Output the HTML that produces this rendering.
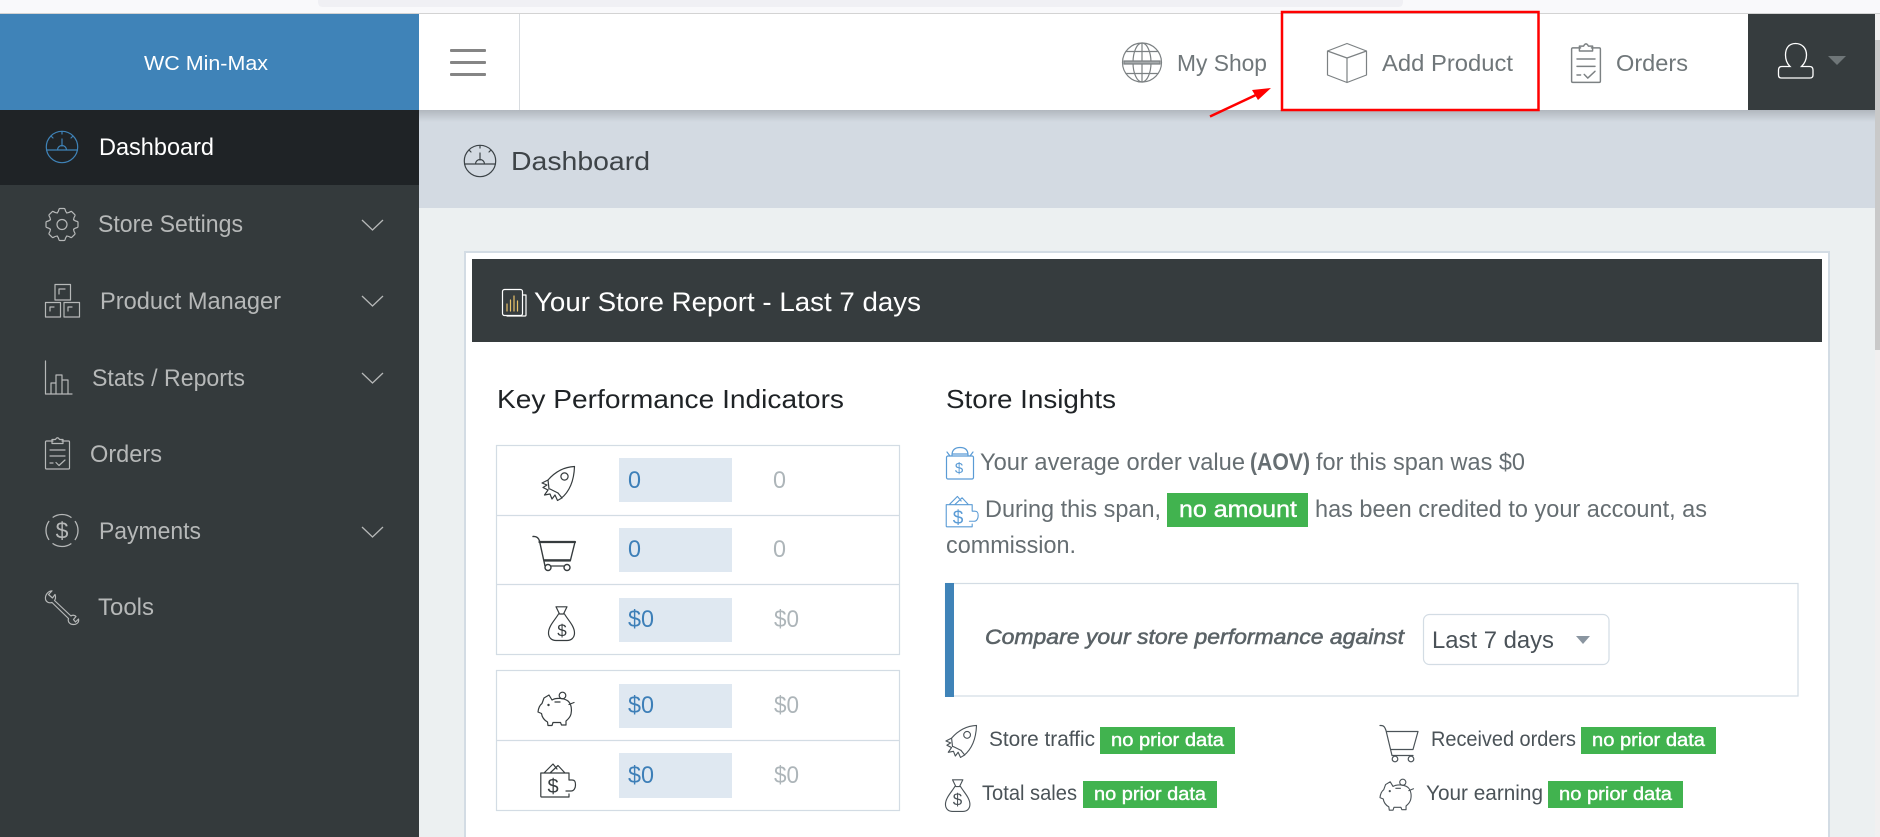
<!DOCTYPE html>
<html lang="en"><head><meta charset="utf-8"><title>Dashboard</title>
<style>
html,body{margin:0;padding:0;width:1880px;height:837px;overflow:hidden;background:#ecf0f1}
svg{display:block}
text{font-family:"Liberation Sans","DejaVu Sans",sans-serif}
.n{font-size:24px;fill:#b6b8b8}
.h{font-size:23.5px;fill:#70777a}
.b{font-size:24px;fill:#666e72}
.s{font-size:21px;fill:#4b5358}
.g{font-size:18px;fill:#fff;stroke:#fff;stroke-width:.4}
.v{font-size:24px;fill:#3d7fb8}
.p{font-size:24px;fill:#adb5b9}
.i{fill:none;stroke-width:1.2;stroke-linecap:round;stroke-linejoin:round}
</style></head><body>
<svg xmlns="http://www.w3.org/2000/svg" width="1880" height="837" viewBox="0 0 1880 837">
<defs>
<linearGradient id="sh" x1="0" y1="0" x2="0" y2="1"><stop offset="0" stop-color="#000" stop-opacity=".16"/><stop offset="1" stop-color="#000" stop-opacity="0"/></linearGradient>
<g id="gauge" class="i"><circle cx="0" cy="0" r="15.7"/><path d="M-15.5 3H15.5M0-8V-1M-4.5 3A4.5 4.5 0 0 1 4.5 3M0-15.500V-13M-10.500-10.500L-9-9M10.500-10.500L9-9"/></g>
<path id="tooth" d="M-4.78-11.55C-4-12.5-3.5-13-3-15.3Q-2.8-16 -2-16H2Q2.8-16 3-15.3C3.5-13 4-12.5 4.78-11.55"/>
<g id="rocket" class="i"><path d="M33.5 0.5C22 1 14 6 7 14L1 17L6 19L2 21.5L7 24L3.5 29L9 28L11 33L14 29L16.5 34.5L20 32.5C28 26 33 15 33.5 0.5ZM7 14L8 23M21 32L17 27"/><circle cx="23.5" cy="10.5" r="3.6"/><path d="M9 23L17 27"/></g>
<g id="cart" class="i"><path d="M0 0H1C4 0 5 2 6 5L12 30M7 6H38L33 24H11M12 30H33"/><circle cx="15" cy="33.500" r="2.800"/><circle cx="31" cy="33.500" r="2.800"/></g>
<g id="bag" class="i"><path d="M8 0.8H19L15.5 8H11.5ZM10.5 8C7 14 0.5 20 0.5 27C0.5 32 4 34.5 8 34.5H19C23 34.5 26.5 32 26.5 27C26.5 20 20 14 16.5 8"/></g>
<g id="pig" class="i"><path d="M6 6L11 3L14 8C18 5.5 26 6 30 9C33.500 12 34 18 33 22C32 26 29 28 28 29V33H23.500L22.500 30.500H15L14 33.500H10L9.500 30C6 28 4 25 3.500 21.500L0 20C.5 15 2 13 4 11.500ZM31 12.500L36 10.500M17 10H22"/><circle cx="24.500" cy="3.500" r="3.300"/><circle cx="10.500" cy="13" r=".6"/></g>
<g id="wallet" class="i"><path d="M4 10L13 1L17 6M10 10L18 2.500L25 10M0.800 10H29V17M29 31V34H1.500Q.800 34 .800 33V10M29 17H32C35 17 35.500 19 35.500 22C35.500 25 34 28 31 28H26"/></g>
<g id="clip" class="i"><path d="M8 4H1.500Q.500 4 .500 5V31Q.500 32 1.500 32H23.500Q24.500 32 24.500 31V5Q24.500 4 23.500 4H17"/><path d="M7 6.500V2.500H10.500Q12.500-1 14.500 2.500H18V6.500ZM5 13H20M5 19H20M5 26H8M11 25.500L14 28.500L20 23"/></g>
</defs>

<!-- page -->
<rect width="1880" height="837" fill="#ecf0f1"/>
<rect width="1880" height="13" fill="#f9f9fb"/>
<path d="M318 0H1403V2Q1403 7 1398 7H323Q318 7 318 2Z" fill="#f0f0f4"/>
<rect y="13" width="1880" height="1.300" fill="#d3d3d3"/>

<!-- title bar -->
<rect x="419" y="110" width="1461" height="98" fill="#d3dae2"/>
<rect x="419" y="110" width="1461" height="12" fill="url(#sh)"/>

<!-- header -->
<rect x="419" y="14" width="1461" height="96" fill="#fff"/>
<rect x="0" y="14" width="419" height="96" fill="#3f83b8"/>
<text x="144" y="70" font-size="20.500" fill="#fff" textLength="124" lengthAdjust="spacingAndGlyphs">WC Min-Max</text>
<rect x="450" y="49" width="36" height="3" rx="1" fill="#858585"/><rect x="450" y="61" width="36" height="3" rx="1" fill="#858585"/><rect x="450" y="73" width="36" height="3" rx="1" fill="#858585"/>
<rect x="519" y="14" width="1" height="96" fill="#d8dce0"/>

<!-- globe -->
<g class="i" stroke="#7c8183" transform="translate(1142 62.500)"><circle r="19.500"/><ellipse rx="9" ry="19.500"/><path d="M0-19.500V19.500M-16-11H16M-16 11H16"/><rect x="-18" y="-1.500" width="36" height="3" fill="#a5a9ab"/></g>
<text class="h" x="1177" y="71" textLength="90" lengthAdjust="spacingAndGlyphs">My Shop</text>
<!-- cube -->
<g class="i" stroke="#7c8183" stroke-width="1.300" transform="translate(1327 43)"><path d="M20 0.500L39.500 8V32L20 39.500L0.500 32V8ZM0.500 8L20 15L39.500 8M20 15V39.500"/></g>
<text class="h" x="1382" y="71" textLength="131" lengthAdjust="spacingAndGlyphs">Add Product</text>
<use href="#clip" stroke="#7c8183" transform="translate(1571 43) scale(1.200 1.230)"/>
<text class="h" x="1616" y="71" textLength="72" lengthAdjust="spacingAndGlyphs">Orders</text>
<!-- scrollbar -->
<rect x="1875" y="14" width="5" height="823" fill="#f1f0f0"/>
<rect x="1875" y="40" width="5" height="310" fill="#c9c9c9"/>
<!-- user -->
<rect x="1748" y="14" width="127" height="96" fill="#363c3e"/>
<path d="M1795.500 43.500C1802 43.500 1806.500 48 1806.500 55C1806.500 60 1804 64 1801.500 66.500H1809.500Q1813 66.500 1813 70V75Q1813 78 1810 78H1781.500Q1778.500 78 1778.500 75V70Q1778.500 66.500 1782 66.500H1790C1787.500 64 1785.500 60 1785.500 55C1785.500 48 1789 43.500 1795.500 43.500Z" fill="none" stroke="#fff" stroke-width="1.300"/>
<path d="M1828 56H1846L1837 65Z" fill="#6f7678"/>
<!-- red annotation -->
<rect x="1282" y="12" width="256.500" height="98" fill="none" stroke="#f00" stroke-width="2.500"/>
<path d="M1210 116.500L1258 94" stroke="#f00" stroke-width="2.500" fill="none"/><path d="M1271 88L1252 90L1258 100Z" fill="#f00"/>

<!-- sidebar -->
<rect y="110" width="419" height="727" fill="#343a3c"/>
<rect y="110" width="419" height="75" fill="#1f2326"/>
<use href="#gauge" stroke="#3f83b8" x="62" y="147"/>
<text x="99" y="155" font-size="24" fill="#fff" textLength="115" lengthAdjust="spacingAndGlyphs">Dashboard</text>

<g class="i" stroke="#b6b8b8" transform="translate(62 224.500)"><circle r="5"/><use href="#tooth"/><use href="#tooth" transform="rotate(45)"/><use href="#tooth" transform="rotate(90)"/><use href="#tooth" transform="rotate(135)"/><use href="#tooth" transform="rotate(180)"/><use href="#tooth" transform="rotate(225)"/><use href="#tooth" transform="rotate(270)"/><use href="#tooth" transform="rotate(315)"/></g>
<text class="n" x="98" y="232" textLength="145" lengthAdjust="spacingAndGlyphs">Store Settings</text>
<path d="M362 220L372.500 230L383 220" fill="none" stroke="#b6b8b8" stroke-width="1.300"/>

<g class="i" stroke="#b6b8b8" transform="translate(45 284)"><path d="M10 .5H25.500V16H10ZM.5 18.500H15.500V33H.5ZM19 18.500H34.500V33H19ZM14 5H20M14 5V10M5 23H9M5 23V27M23 23H27M23 23V27"/></g>
<text class="n" x="100" y="309" textLength="181" lengthAdjust="spacingAndGlyphs">Product Manager</text>
<path d="M362 296L372.500 306L383 296" fill="none" stroke="#b6b8b8" stroke-width="1.300"/>

<g class="i" stroke="#b6b8b8" transform="translate(45 361)"><path d="M.5 0V33H27M6 33V22H11V33M11 33V14H17V33M17 33V19H23V33"/></g>
<text class="n" x="92" y="386" textLength="153" lengthAdjust="spacingAndGlyphs">Stats / Reports</text>
<path d="M362 373L372.500 383L383 373" fill="none" stroke="#b6b8b8" stroke-width="1.300"/>

<use href="#clip" stroke="#b6b8b8" transform="translate(45 437)"/>
<text class="n" x="90" y="462" textLength="72" lengthAdjust="spacingAndGlyphs">Orders</text>

<circle cx="62" cy="530.500" r="16" fill="none" stroke="#b6b8b8" stroke-width="1.300" stroke-dasharray="20.100 5" stroke-dashoffset="10"/>
<text x="62" y="538.500" font-size="23" fill="#b6b8b8" text-anchor="middle">$</text>
<text class="n" x="99" y="539" textLength="102" lengthAdjust="spacingAndGlyphs">Payments</text>
<path d="M362 527L372.500 537L383 527" fill="none" stroke="#b6b8b8" stroke-width="1.300"/>

<g class="i" stroke="#b6b8b8" transform="translate(45 590)"><path d="M7 .8L3.500 4.500L7.500 8L10 4.500C11 7 10.500 9.500 9.500 10.500L26 26C27 24.800 30 25 31 26.500L28.500 29.500L30.500 32L33.500 29C34.300 32 32 34.500 28.500 34.500C24.500 34.500 22.500 31.500 23.500 28.500L7 12.500C4 13.500 1 12 .5 9C0 5 3 1 7 .8Z"/></g>
<text class="n" x="98" y="615" textLength="56" lengthAdjust="spacingAndGlyphs">Tools</text>

<!-- title -->
<use href="#gauge" stroke="#3b4246" transform="translate(480 161)"/>
<text x="511" y="170" font-size="26" fill="#3e4448" textLength="139" lengthAdjust="spacingAndGlyphs">Dashboard</text>

<!-- panel -->
<rect x="465" y="252" width="1364" height="600" fill="#fff" stroke="#d3dce4" stroke-width="2"/>
<rect x="472" y="259" width="1350" height="83" fill="#363c3e"/>
<g class="i" stroke="#fff" transform="translate(502 289)"><rect x=".5" y=".5" width="20" height="26" rx="2"/><path d="M21 6H24V26Q24 27 23 27H5"/><path d="M5 22V15M8.500 22V11M12 22V7M15.500 22V12" stroke="#e8c26a"/></g>
<text x="534" y="311" font-size="27" fill="#fff" textLength="387" lengthAdjust="spacingAndGlyphs">Your Store Report - Last 7 days</text>

<!-- KPI -->
<text x="497" y="408" font-size="26" fill="#1f2326" textLength="347" lengthAdjust="spacingAndGlyphs">Key Performance Indicators</text>
<g fill="none" stroke="#d3dce4" stroke-width="1.200"><rect x="496.500" y="445.500" width="403" height="209"/><path d="M496 515.500H900M496 584.500H900"/><rect x="496.500" y="670.500" width="403" height="140"/><path d="M496 740.500H900"/></g>
<g fill="#dfe8f1"><rect x="619" y="458" width="113" height="44"/><rect x="619" y="528" width="113" height="44"/><rect x="619" y="598" width="113" height="44"/><rect x="619" y="684" width="113" height="44"/><rect x="619" y="753" width="113" height="45"/></g>
<text class="v" x="628" y="488" textLength="13" lengthAdjust="spacingAndGlyphs">0</text><text class="p" x="773" y="488" textLength="13" lengthAdjust="spacingAndGlyphs">0</text>
<text class="v" x="628" y="557" textLength="13" lengthAdjust="spacingAndGlyphs">0</text><text class="p" x="773" y="557" textLength="13" lengthAdjust="spacingAndGlyphs">0</text>
<text class="v" x="628" y="627" textLength="26" lengthAdjust="spacingAndGlyphs">$0</text><text class="p" x="774" y="627" textLength="25" lengthAdjust="spacingAndGlyphs">$0</text>
<text class="v" x="628" y="713" textLength="26" lengthAdjust="spacingAndGlyphs">$0</text><text class="p" x="774" y="713" textLength="25" lengthAdjust="spacingAndGlyphs">$0</text>
<text class="v" x="628" y="783" textLength="26" lengthAdjust="spacingAndGlyphs">$0</text><text class="p" x="774" y="783" textLength="25" lengthAdjust="spacingAndGlyphs">$0</text>
<use href="#rocket" stroke="#363c3e" x="541" y="466"/>
<!-- KPI cart -->
<g fill="none" stroke="#363c3e" stroke-linecap="round" stroke-linejoin="round"><path d="M533 536.500Q538 536 539.500 541L545 566" stroke-width="1.400"/><path d="M539.500 542H575" stroke-width="2.200"/><path d="M575 542L570.500 560M544 560H570.500" stroke-width="1.400"/><path d="M545 560.500H570" stroke-width="2.200"/><circle cx="548" cy="567.500" r="3" stroke-width="1.400"/><circle cx="567" cy="567.500" r="3" stroke-width="1.400"/><path d="M551 566H564" stroke-width="1.200"/></g>
<use href="#bag" stroke="#363c3e" x="548" y="606"/><text x="562" y="636" font-size="17" fill="#363c3e" text-anchor="middle">$</text>
<use href="#pig" stroke="#363c3e" x="538" y="692"/>
<use href="#wallet" stroke="#363c3e" x="540" y="763"/><text x="553" y="793" font-size="20" fill="#363c3e" text-anchor="middle">$</text>

<!-- insights -->
<text x="946" y="408" font-size="26" fill="#1f2326" textLength="170" lengthAdjust="spacingAndGlyphs">Store Insights</text>
<g class="i" stroke="#5a9bd5" transform="translate(946 447)"><rect x=".5" y="9" width="27" height="23" rx="1.500"/><path d="M6 9V8C6 3 9 .5 14 .5C19 .5 22 3 22 8V9M4 9L1 5M24 9L27 5M6 7H22"/></g>
<text x="959" y="473" font-size="15" fill="#5a9bd5" text-anchor="middle">$</text>
<text class="b" x="980" y="470" textLength="265" lengthAdjust="spacingAndGlyphs">Your average order value</text>
<text class="b" x="1250" y="470" font-weight="bold" textLength="60" lengthAdjust="spacingAndGlyphs">(AOV)</text>
<text class="b" x="1316" y="470" textLength="209" lengthAdjust="spacingAndGlyphs">for this span was $0</text>

<use href="#wallet" stroke="#5a9bd5" transform="translate(945.500 495.500) scale(.92)"/>
<text x="958" y="524" font-size="19" fill="#5a9bd5" text-anchor="middle">$</text>
<text class="b" x="985" y="517" textLength="176" lengthAdjust="spacingAndGlyphs">During this span,</text>
<rect x="1167" y="493" width="141" height="34" fill="#41b34f"/>
<text x="1179" y="517" font-size="23" fill="#fff" stroke="#fff" stroke-width=".4" textLength="118" lengthAdjust="spacingAndGlyphs">no amount</text>
<text class="b" x="1315" y="517" textLength="392" lengthAdjust="spacingAndGlyphs">has been credited to your account, as</text>
<text class="b" x="946" y="553" textLength="130" lengthAdjust="spacingAndGlyphs">commission.</text>

<!-- compare -->
<rect x="945.500" y="583.500" width="852.500" height="112.500" fill="#fff" stroke="#d3dce4" stroke-width="1.200"/>
<rect x="945" y="583" width="9" height="114" fill="#3f83b8"/>
<text x="985" y="644" font-size="21.500" font-style="italic" fill="#5a6266" stroke="#5a6266" stroke-width=".55" textLength="419" lengthAdjust="spacingAndGlyphs">Compare your store performance against</text>
<rect x="1423.500" y="614.500" width="185.500" height="50" rx="6" fill="#fff" stroke="#d3dce4" stroke-width="1.200"/>
<text x="1432" y="648" font-size="24.500" fill="#4a5258" textLength="122" lengthAdjust="spacingAndGlyphs">Last 7 days</text>
<path d="M1576 636H1590L1583 644Z" fill="#8a95a0"/>

<!-- bottom stats -->
<use href="#rocket" stroke="#4b5358" transform="translate(945 725) scale(.94)"/>
<text class="s" x="989" y="746" textLength="106" lengthAdjust="spacingAndGlyphs">Store traffic</text>
<rect x="1100" y="727" width="135" height="27" fill="#41b34f"/>
<text class="g" x="1111" y="746" textLength="113" lengthAdjust="spacingAndGlyphs">no prior data</text>

<use href="#bag" stroke="#4b5358" transform="translate(945 779) scale(.94)"/><text x="957.500" y="805" font-size="17" fill="#4b5358" text-anchor="middle">$</text>
<text class="s" x="982" y="800" textLength="95" lengthAdjust="spacingAndGlyphs">Total sales</text>
<rect x="1083" y="781" width="134" height="27" fill="#41b34f"/>
<text class="g" x="1094" y="800" textLength="112" lengthAdjust="spacingAndGlyphs">no prior data</text>

<use href="#cart" stroke="#4b5358" transform="translate(1380 725.500)"/>
<text class="s" x="1431" y="746" textLength="145" lengthAdjust="spacingAndGlyphs">Received orders</text>
<rect x="1581" y="727" width="135" height="27" fill="#41b34f"/>
<text class="g" x="1592" y="746" textLength="113" lengthAdjust="spacingAndGlyphs">no prior data</text>

<use href="#pig" stroke="#4b5358" transform="translate(1380 779) scale(.93)"/>
<text class="s" x="1426" y="800" textLength="117" lengthAdjust="spacingAndGlyphs">Your earning</text>
<rect x="1548" y="781" width="135" height="27" fill="#41b34f"/>
<text class="g" x="1559" y="800" textLength="113" lengthAdjust="spacingAndGlyphs">no prior data</text>
</svg>
</body></html>
